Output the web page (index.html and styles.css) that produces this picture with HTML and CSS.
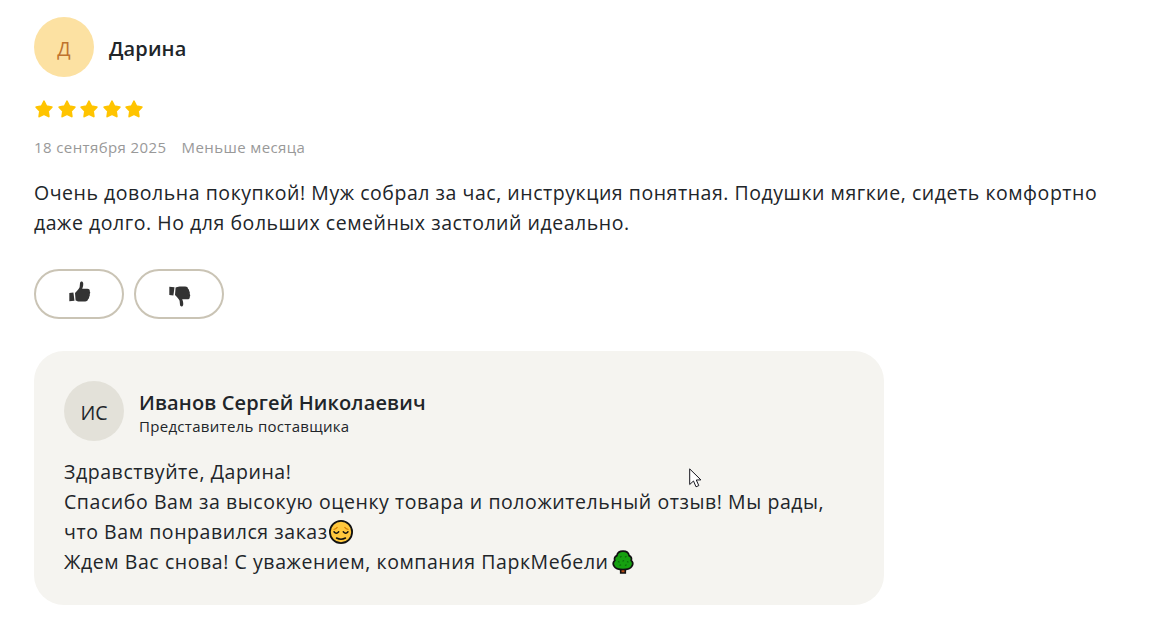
FILE: index.html
```html
<!DOCTYPE html>
<html lang="ru">
<head>
    <meta charset="UTF-8">
    <meta name="viewport" content="width=device-width, initial-scale=1.0">
    <title>Отзыв</title>
    <link rel="stylesheet" href="styles.css">
</head>
<body>
    <!-- Shared icon shapes -->
    <svg class="sprite" width="0" height="0">
        <symbol id="star" viewBox="0 0 20 20">
            <path d="M10 2.3 L12.4 7.2 L17.8 8.1 L14 12 L14.8 17.5 L10 15.1 L5.2 17.5 L6 12 L2.2 8.1 L7.6 7.2 Z" fill="#ffc400" stroke="#ffc400" stroke-width="1.8" stroke-linejoin="round"/>
        </symbol>
        <symbol id="thumb" viewBox="0 0 22 22">
            <path d="M.3 12 L4.4 11.6 L5.5 19.7 L.3 20.3 Z"/>
            <path d="M6 12 C7.5 10.5 9.8 8.3 10.6 6.2 L11 2.2 C11.2 .1 13.9 -.1 14.2 2.3 C14.4 4.4 13.8 6.3 13.2 7.7 L18.5 7.7 C20.2 7.8 21 8.7 20.7 10.2 C21.4 11 21.4 12.2 20.7 13 C21 14.2 20.8 15.2 20.1 15.9 C20.3 17.2 19.6 18 19 18.3 C18.9 19.6 17.8 20.5 16.2 20.5 L10.6 20.5 C8.8 20.5 7.8 19.6 6.6 19.4 Z"/>
        </symbol>
    </svg>

    <main class="review">
        <!-- Author -->
        <header class="author">
            <div class="avatar">Д</div>
            <h2 class="author-name">Дарина</h2>
        </header>

        <div class="stars">
            <svg><use href="#star"/></svg>
            <svg><use href="#star"/></svg>
            <svg><use href="#star"/></svg>
            <svg><use href="#star"/></svg>
            <svg><use href="#star"/></svg>
        </div>

        <div class="meta">
            <span>18 сентября 2025</span>
            <span>Меньше месяца</span>
        </div>

        <p class="review-text">Очень довольна покупкой! Муж собрал за час, инструкция понятная. Подушки мягкие, сидеть комфортно<br>даже долго. Но для больших семейных застолий идеально.</p>

        <!-- Votes -->
        <div class="votes">
            <button class="vote" aria-label="Нравится"><svg><use href="#thumb"/></svg></button>
            <button class="vote vote-down" aria-label="Не нравится"><svg><use href="#thumb"/></svg></button>
        </div>

        <!-- Supplier answer -->
        <section class="answer">
            <header class="author">
                <div class="avatar avatar-grey">ИС</div>
                <div class="answer-title">
                    <h2 class="answer-name">Иванов Сергей Николаевич</h2>
                    <div class="answer-role">Представитель поставщика</div>
                </div>
            </header>
            <p class="answer-text">Здравствуйте, Дарина!<br>Спасибо Вам за высокую оценку товара и положительный отзыв! Мы рады,<br>что Вам понравился заказ<svg class="emoji" viewBox="0 0 26 26">
                <circle cx="13" cy="13" r="11.1" fill="#ffc83d" stroke="#111" stroke-width="1.8"/>
                <path d="M5.5 10.5 Q8 10.3 9.5 8.2 M20.5 10.5 Q18 10.3 16.5 8.2" fill="none" stroke="#d67d00" stroke-width="1.2"/>
                <path d="M6 12.8 Q8.3 15.8 10.7 12.8 M15.3 12.8 Q17.7 15.8 20 12.8 M8.5 19 Q13 21.5 17.5 19" fill="none" stroke="#111" stroke-width="1.5" stroke-linecap="round"/>
            </svg><br>Ждем Вас снова! С уважением, компания ПаркМебели<svg class="emoji emoji-tree" viewBox="0 0 26 26">
                <path d="M10.7 19 H15.3 V24 H10.7 Z" fill="#b84b16" stroke="#111" stroke-width="1.6"/>
                <path d="M13 2.1 C9.6 2.1 7.3 4 6.9 6.6 C4.7 7.5 4 9.6 4.8 11.3 C3 13 2.9 15.4 4.2 17.3 C5.6 19.9 8.4 20.5 13 20.5 C17.6 20.5 20.4 19.9 21.8 17.3 C23.1 15.4 23 13 21.2 11.3 C22 9.6 21.3 7.5 19.1 6.6 C18.7 4 16.4 2.1 13 2.1 Z" fill="#16a010" stroke="#111" stroke-width="1.7"/>
                <path d="M10 8.3 l1.5 -1 M15 8.3 l1.5 -1 M8 12.4 l1.5 .8 M12.5 12.3 l1.5 -.8 M17 12.4 l1.5 .8 M9.5 16.5 l1.6 -.8 M15 16.5 l1.6 -.8" stroke="#0b6a0b" stroke-width="1.1"/>
            </svg></p>
        </section>
    </main>

    <!-- Pointer over the answer -->
    <svg class="cursor" viewBox="0 0 13 20">
        <path d="M.7 .9 V16.5 L4.5 13 L7 18.8 L9.8 17.6 L7.3 12 L11.9 11.9 Z" fill="#fff" stroke="#16161e" stroke-width="1"/>
    </svg>
</body>
</html>
```
FILE: styles.css
```css
/* Reset and base styles */
* {
    box-sizing: border-box;
    margin: 0;
    padding: 0;
}

body {
    font-family: "Segoe UI", "Open Sans", "Noto Sans", sans-serif;
    font-size: 19.5px;
    line-height: 30px;
    color: #212529;
    background: #fff;
}

.sprite {
    display: block;
}

.review {
    padding: 17px 34px 29px;
}

/* Author */
.author {
    display: flex;
    align-items: center;
    gap: 15px;
    height: 60px;
}

.avatar {
    width: 60px;
    height: 60px;
    border-radius: 50%;
    background: #fce1a2;
    color: #bf732e;
    line-height: 64px;
    text-align: center;
}

.avatar-grey {
    background: #e3e1d9;
    color: #212529;
}

.author-name,
.answer-name {
    font-size: 20px;
    font-weight: 600;
    letter-spacing: 0.13px;
}

.author-name {
    padding-top: 3px;
}

/* Rating */
.stars {
    display: flex;
    gap: 2.5px;
    margin-top: 22px;
}

.stars svg {
    width: 20px;
    height: 20px;
}

.meta {
    display: flex;
    gap: 15px;
    margin-top: 16px;
    font-size: 15px;
    line-height: 24px;
    letter-spacing: 0.4px;
    color: #999;
}

.review-text {
    margin-top: 19px;
    letter-spacing: 0.54px;
    white-space: nowrap;
}

/* Votes */
.votes {
    display: flex;
    gap: 10px;
    margin-top: 31px;
}

.vote {
    display: flex;
    align-items: center;
    justify-content: center;
    width: 90px;
    height: 50px;
    padding: 0 0 4px 1px;
    border: 2px solid #cac4b5;
    border-radius: 25px;
    background: #fff;
}

.vote svg {
    width: 22px;
    height: 22px;
    fill: #333;
}

.vote-down {
    padding: 3px 0 0 1px;
}

.vote-down svg {
    transform: scaleY(-1);
}

/* Supplier answer */
.answer {
    width: 850px;
    height: 254px;
    margin-top: 32px;
    padding: 30px;
    border-radius: 30px;
    background: #f5f4f0;
}

.answer-title {
    padding-top: 5px;
}

.answer-name {
    line-height: 26px;
}

.answer-role {
    font-size: 15px;
    line-height: 21px;
    letter-spacing: 0.3px;
}

.answer-text {
    margin-top: 16px;
    letter-spacing: 0.57px;
    white-space: nowrap;
}

.emoji {
    width: 26px;
    height: 26px;
    margin-left: 0;
    vertical-align: -6px;
}

.emoji-tree {
    margin-left: 1px;
}

.cursor {
    position: absolute;
    left: 689px;
    top: 468px;
    width: 13px;
    height: 20px;
}
```
